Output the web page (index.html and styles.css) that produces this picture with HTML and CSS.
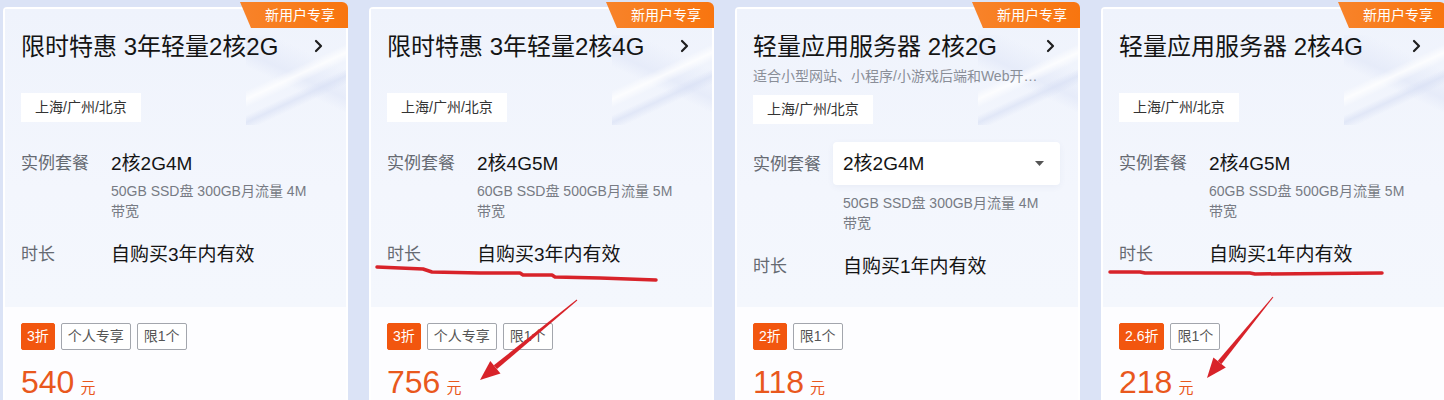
FILE: index.html
```html
<!DOCTYPE html>
<html lang="zh-CN">
<head>
<meta charset="utf-8">
<title>轻量应用服务器</title>
<link rel="stylesheet" href="styles.css">
</head>
<body>
<div class="cards">
  <div class="card">
    <div class="badge">新用户专享</div>
    <div class="top">
      <div class="deco"></div>
      <div class="title-row"><div class="title">限时特惠 3年轻量2核2G</div><svg class="chev" width="9" height="14" viewBox="0 0 9 14"><polyline points="2,2 7,7 2,12" fill="none" stroke="#1f1f1f" stroke-width="2.2" stroke-linecap="round" stroke-linejoin="round"/></svg></div>
      <div class="desc"></div>
      <div class="loc">上海/广州/北京</div>
      <div class="row plan"><div class="label">实例套餐</div><div><div class="value">2核2G4M</div><div class="spec">50GB SSD盘 300GB月流量 4M带宽</div></div></div>
      <div class="row dur"><div class="label">时长</div><div class="value">自购买3年内有效</div></div>
    </div>
    <div class="bottom">
      <div class="tags"><span class="tag hot">3折</span><span class="tag">个人专享</span><span class="tag">限1个</span></div>
      <div class="price"><span class="num">540</span><span class="unit">元</span></div>
    </div>
  </div>

  <div class="card">
    <div class="badge">新用户专享</div>
    <div class="top">
      <div class="deco"></div>
      <div class="title-row"><div class="title">限时特惠 3年轻量2核4G</div><svg class="chev" width="9" height="14" viewBox="0 0 9 14"><polyline points="2,2 7,7 2,12" fill="none" stroke="#1f1f1f" stroke-width="2.2" stroke-linecap="round" stroke-linejoin="round"/></svg></div>
      <div class="desc"></div>
      <div class="loc">上海/广州/北京</div>
      <div class="row plan"><div class="label">实例套餐</div><div><div class="value">2核4G5M</div><div class="spec">60GB SSD盘 500GB月流量 5M带宽</div></div></div>
      <div class="row dur"><div class="label">时长</div><div class="value">自购买3年内有效</div></div>
    </div>
    <div class="bottom">
      <div class="tags"><span class="tag hot">3折</span><span class="tag">个人专享</span><span class="tag">限1个</span></div>
      <div class="price"><span class="num">756</span><span class="unit">元</span></div>
    </div>
  </div>

  <div class="card">
    <div class="badge">新用户专享</div>
    <div class="top">
      <div class="deco"></div>
      <div class="title-row"><div class="title">轻量应用服务器 2核2G</div><svg class="chev" width="9" height="14" viewBox="0 0 9 14"><polyline points="2,2 7,7 2,12" fill="none" stroke="#1f1f1f" stroke-width="2.2" stroke-linecap="round" stroke-linejoin="round"/></svg></div>
      <div class="desc">适合小型网站、小程序/小游戏后端和Web开…</div>
      <div class="loc">上海/广州/北京</div>
      <div class="row plan sel"><div class="label">实例套餐</div><div><div class="select"><span class="value">2核2G4M</span><svg width="9" height="5" viewBox="0 0 9 5"><polygon points="0,0 9,0 4.5,5" fill="#555"/></svg></div><div class="spec">50GB SSD盘 300GB月流量 4M带宽</div></div></div>
      <div class="row dur"><div class="label">时长</div><div class="value">自购买1年内有效</div></div>
    </div>
    <div class="bottom">
      <div class="tags"><span class="tag hot">2折</span><span class="tag">限1个</span></div>
      <div class="price"><span class="num">118</span><span class="unit">元</span></div>
    </div>
  </div>

  <div class="card">
    <div class="badge">新用户专享</div>
    <div class="top">
      <div class="deco"></div>
      <div class="title-row"><div class="title">轻量应用服务器 2核4G</div><svg class="chev" width="9" height="14" viewBox="0 0 9 14"><polyline points="2,2 7,7 2,12" fill="none" stroke="#1f1f1f" stroke-width="2.2" stroke-linecap="round" stroke-linejoin="round"/></svg></div>
      <div class="desc"></div>
      <div class="loc">上海/广州/北京</div>
      <div class="row plan"><div class="label">实例套餐</div><div><div class="value">2核4G5M</div><div class="spec">60GB SSD盘 500GB月流量 5M带宽</div></div></div>
      <div class="row dur"><div class="label">时长</div><div class="value">自购买1年内有效</div></div>
    </div>
    <div class="bottom">
      <div class="tags"><span class="tag hot">2.6折</span><span class="tag">限1个</span></div>
      <div class="price"><span class="num">218</span><span class="unit">元</span></div>
    </div>
  </div>
</div>

<svg class="marks" width="1444" height="400" viewBox="0 0 1444 400">
  <polyline points="377,267 400,268 423,269 432,272 480,273 520,273 523,275 552,275 555,277 600,278 656,280" fill="none" stroke="#d8232a" stroke-width="3.5" stroke-linecap="round" stroke-linejoin="round"/>
  <polygon points="576.7,299.6 577.3,300.4 497,369.1 493.8,365.3" fill="#d8232a"/>
  <polygon points="480,380 500.5,373.4 490.3,361" fill="#d8232a"/>
  <polyline points="1110,272 1140,272 1145,273 1250,273 1255,274 1382,273" fill="none" stroke="#d8232a" stroke-width="3.5" stroke-linecap="round" stroke-linejoin="round"/>
  <polygon points="1272.6,296.7 1273.4,297.3 1221.5,364.1 1217.7,360.9" fill="#d8232a"/>
  <polygon points="1207,378 1225.8,367.5 1213.4,357.5" fill="#d8232a"/>
</svg>
</body>
</html>
```
FILE: styles.css
```css
* { box-sizing: border-box; }
html, body { margin: 0; padding: 0; }
body {
  position: relative;
  width: 1444px;
  height: 400px;
  overflow: hidden;
  background: #dbe3f6;
  font-family: "Liberation Sans", "Noto Sans CJK SC", sans-serif;
  color: #1a1a1a;
}
.cards {
  display: flex;
  gap: 21px;
  padding: 7px 0 0 3px;
}
.card {
  position: relative;
  flex: 0 0 345px;
  width: 345px;
  min-width: 0;
  border: 2px solid rgba(255, 255, 255, 0.85);
  border-radius: 4px;
  background: #fff;
}
.badge {
  position: absolute;
  top: -7px;
  right: -2px;
  width: 108px;
  height: 26px;
  padding-left: 12px;
  background: linear-gradient(90deg, #f8832a, #f8750f);
  color: #fff;
  font-size: 14px;
  line-height: 26px;
  text-align: center;
  border-top-right-radius: 6px;
  clip-path: polygon(0 0, 100% 0, 100% 100%, 11px 100%);
  z-index: 2;
}
.top {
  position: relative;
  height: 298px;
  padding: 22px 23px 0 16px;
  background: linear-gradient(180deg, #eff3fc 0%, #f3f6fd 60%, #f4f7fd 100%);
  overflow: hidden;
}
.deco {
  position: absolute;
  right: -20px;
  top: 26px;
  width: 120px;
  height: 90px;
  background:
    linear-gradient(155deg, transparent 38%, rgba(255,255,255,0.8) 44%, transparent 50%),
    linear-gradient(155deg, transparent 55%, rgba(214,222,244,0.6) 60%, transparent 66%),
    linear-gradient(25deg, transparent 40%, rgba(226,232,248,0.7) 50%, transparent 70%);
  pointer-events: none;
}
.title-row {
  position: relative;
  display: flex;
  align-items: center;
  justify-content: space-between;
  height: 32px;
}
.title {
  min-width: 0;
  font-size: 24px;
  line-height: 32px;
  color: #141414;
  white-space: nowrap;
}
.chev { flex: none; margin-top: -2px; }
.desc {
  position: relative;
  margin-top: 3px;
  height: 20px;
  font-size: 14px;
  line-height: 20px;
  color: #8a8e98;
  white-space: nowrap;
  overflow: hidden;
  text-overflow: ellipsis;
}
.desc:empty { height: 18px; }
.loc {
  position: relative;
  width: fit-content;
  margin-top: 9px;
  height: 29px;
  padding: 0 14px;
  background: #fff;
  font-size: 14px;
  line-height: 29px;
  color: #333;
}
.row {
  position: relative;
  display: grid;
  grid-template-columns: 90px minmax(0, 1fr);
  align-items: start;
}
.plan { margin-top: 30px; }
.plan.sel { margin-top: 18px; }
.dur { margin-top: 22px; }
.label {
  font-size: 17px;
  line-height: 24px;
  color: #666a72;
}
.sel .label { line-height: 45px; }
.value {
  font-size: 19px;
  line-height: 24px;
  color: #141414;
  white-space: nowrap;
}
.select {
  display: flex;
  align-items: center;
  justify-content: space-between;
  height: 43px;
  margin: 0 -5px 0 -10px;
  padding: 0 16px 0 10px;
  background: #fff;
  border-radius: 4px;
  box-shadow: 0 2px 6px rgba(60, 80, 140, 0.06);
}
.spec {
  margin-top: 5px;
  max-width: 196px;
  font-size: 14px;
  line-height: 20px;
  color: #777b84;
}
.sel .spec { margin-top: 8px; }
.bottom {
  padding: 16px 16px 30px;
  background: #fdfdff;
}
.tags {
  display: flex;
  gap: 6px;
}
.tag {
  height: 27px;
  padding: 0 6px;
  border: 1px solid #a3a6ad;
  border-radius: 2px;
  font-size: 14px;
  line-height: 25px;
  color: #555;
  background: #fff;
}
.tag.hot {
  padding: 0 5px;
  background: #f2560f;
  border-color: #f2560f;
  color: #fff;
}
.price {
  margin-top: 12px;
  height: 40px;
  line-height: 40px;
  color: #e9581d;
}
.num { font-size: 32px; }
.unit { font-size: 15px; margin-left: 6px; }
.marks {
  position: absolute;
  left: 0;
  top: 0;
  pointer-events: none;
}
```
